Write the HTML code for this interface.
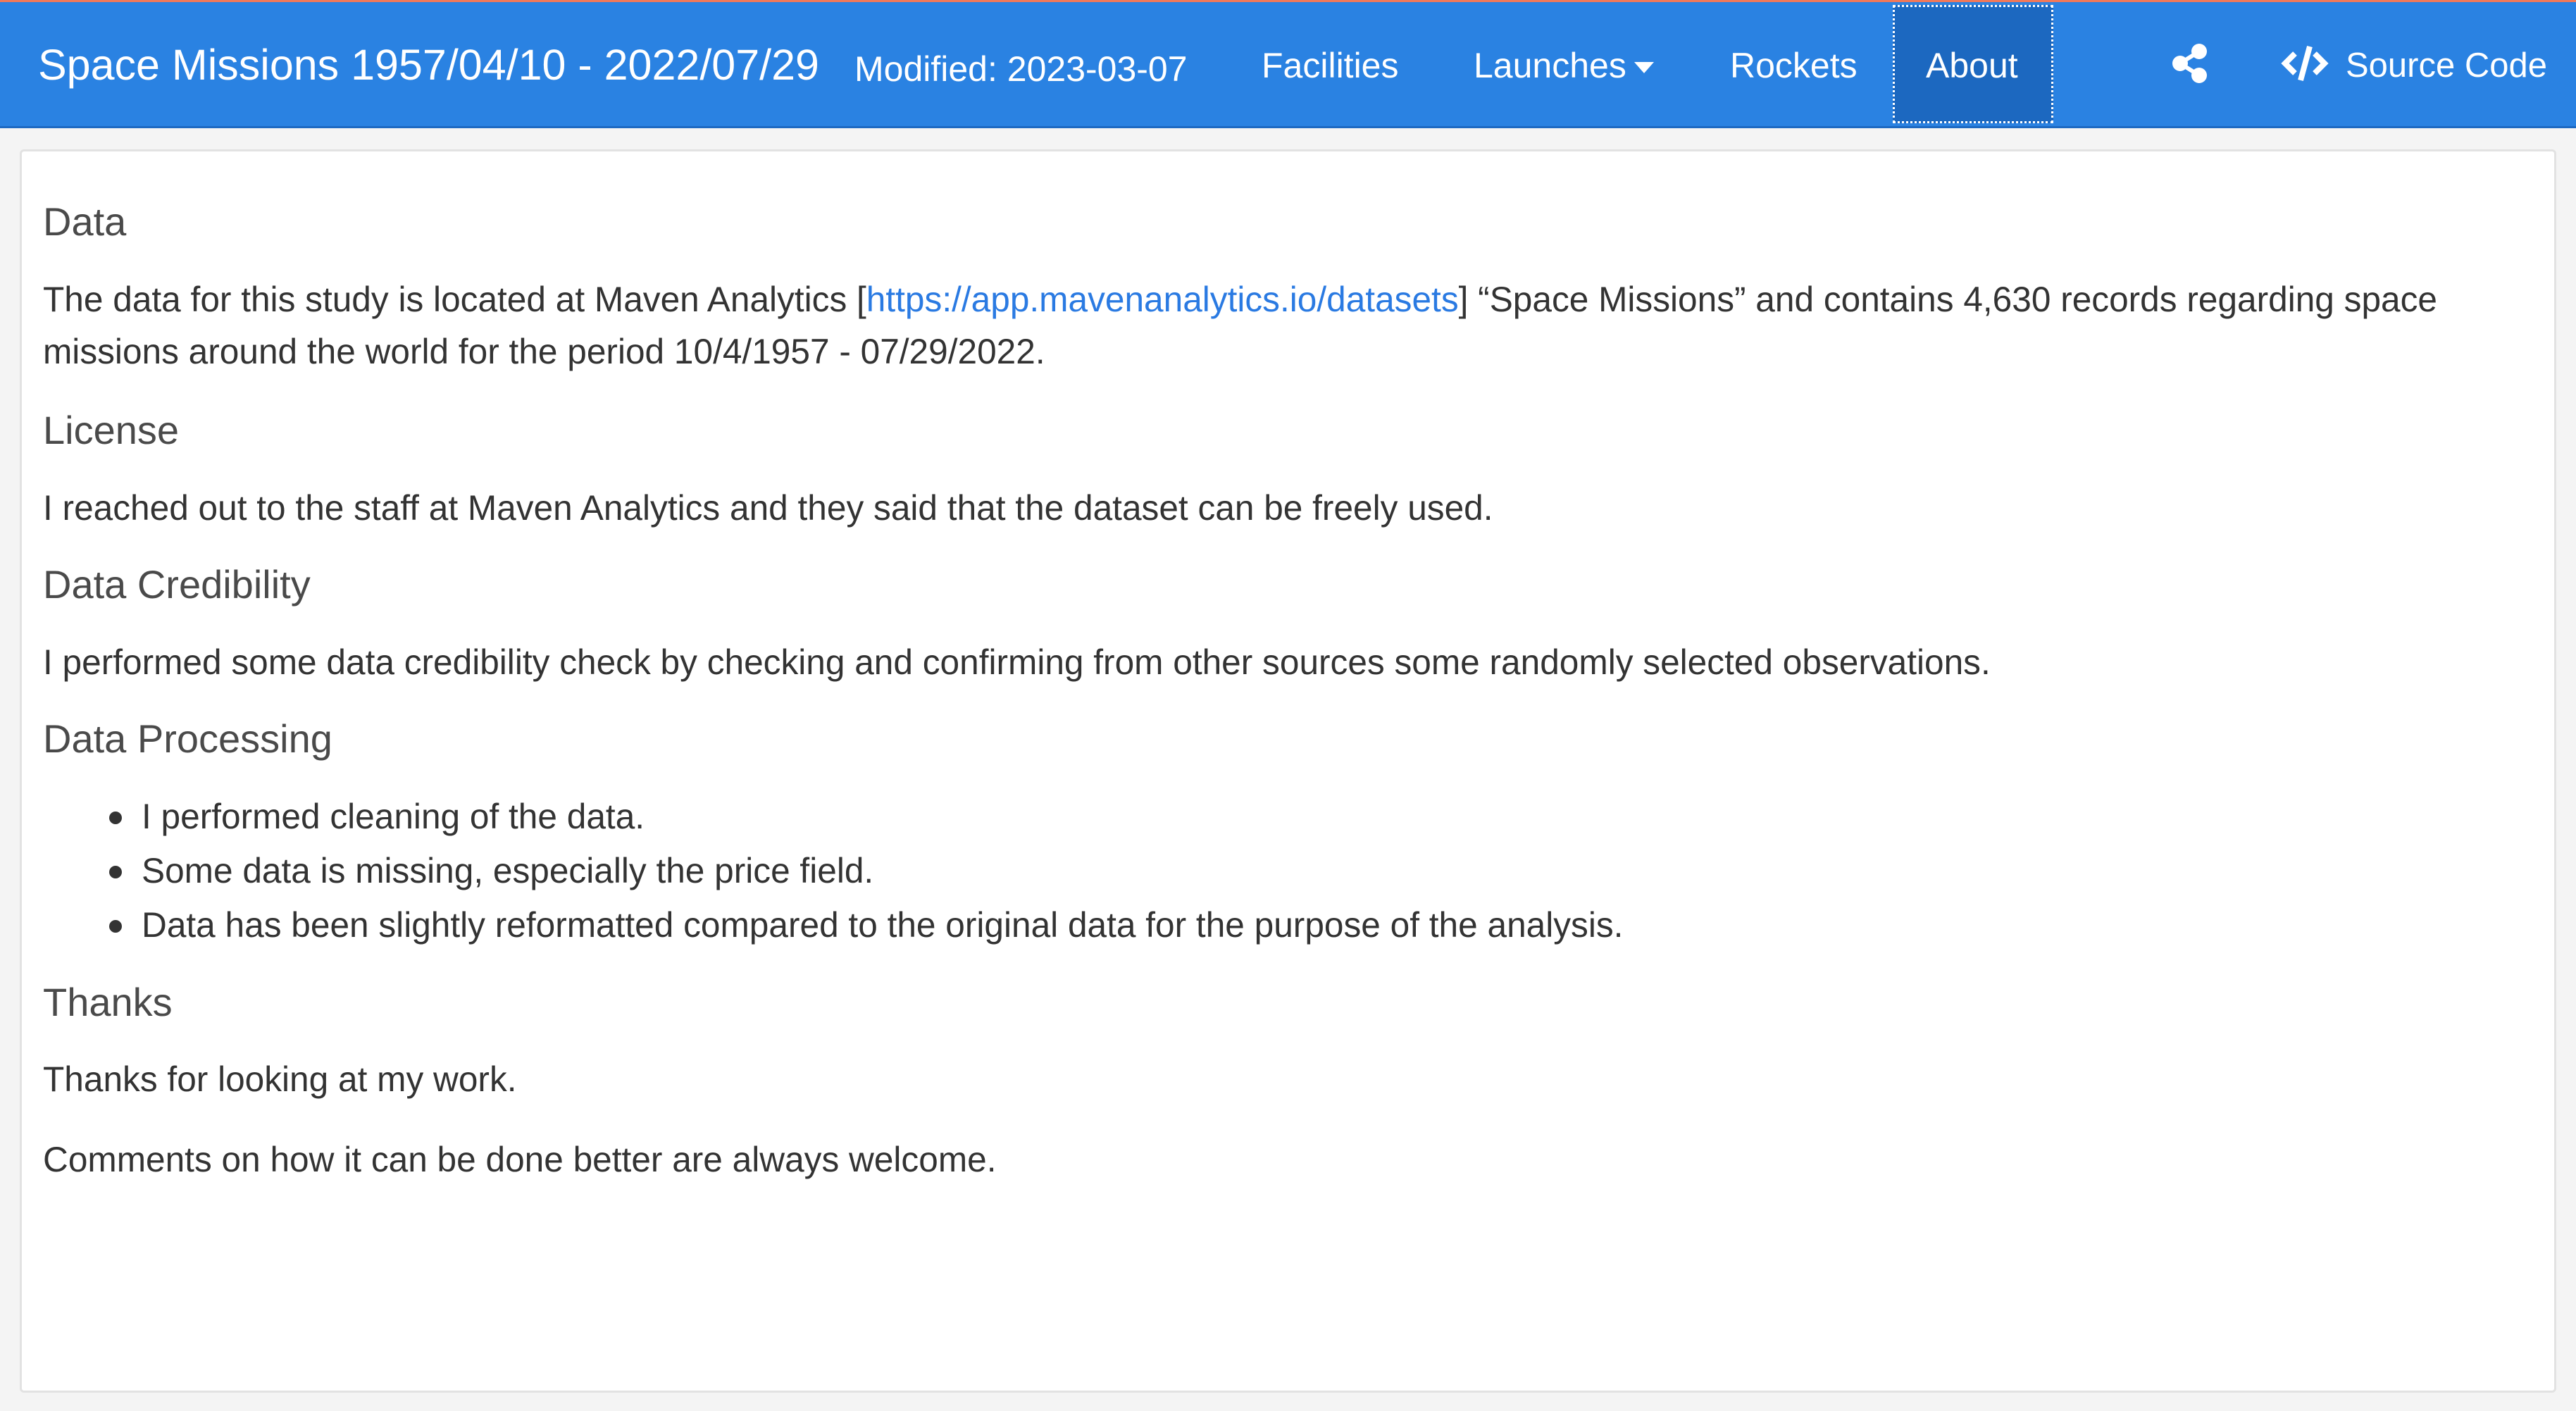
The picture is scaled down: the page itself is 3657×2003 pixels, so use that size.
<!DOCTYPE html>
<html><head><meta charset="utf-8"><style>
*{margin:0;padding:0;box-sizing:border-box}
html,body{width:3657px;height:2003px;overflow:hidden;background:#f4f4f4;font-family:"Liberation Sans",sans-serif;color:#333}
.nav{position:absolute;left:0;top:0;width:3657px;height:182px;background:#2a82e2;border-top:3px solid #f0795a;border-bottom:3px solid #1d69c2}
.n{position:absolute;color:#fff;white-space:nowrap;line-height:60px}
.about{position:absolute;left:2687px;top:7px;width:228px;height:168px;background:#1c68c0;border:3px dotted #fff}
.card{position:absolute;left:28px;top:212px;width:3601px;height:1765px;background:#fff;border:3px solid #e2e2e2;border-radius:6px}
.t{position:absolute;white-space:nowrap;line-height:70px}
.h{font-size:56px;color:#4a4a4a}
.p{font-size:49.6px;color:#333}
a{color:#2a7ae2;text-decoration:none}
.dot{position:absolute;width:18px;height:18px;border-radius:50%;background:#333}
</style></head><body>
<div class="nav"></div>
<div class="n" style="left:54px;top:62px;font-size:61px">Space Missions 1957/04/10 - 2022/07/29</div>
<div class="n" style="left:1213px;top:68px;font-size:50px">Modified: 2023-03-07</div>
<div class="n" style="left:1791px;top:63px;font-size:50px">Facilities</div>
<div class="n" style="left:2092px;top:63px;font-size:50px">Launches</div>
<svg style="position:absolute;left:2320px;top:88px" width="28" height="16"><path d="M0 0H28L14 16Z" fill="#fff"/></svg>
<div class="n" style="left:2456px;top:63px;font-size:50px">Rockets</div>
<div class="about"></div>
<div class="n" style="left:2734px;top:63px;font-size:50px">About</div>
<svg style="position:absolute;left:3080px;top:58px" width="60" height="64" viewBox="3080 58 60 64"><g fill="#fff"><circle cx="3122" cy="73" r="11"/><circle cx="3122" cy="107" r="11"/><circle cx="3095" cy="90" r="11"/></g><path d="M3122 73L3095 90L3122 107" stroke="#fff" stroke-width="6" fill="none"/></svg>
<svg style="position:absolute;left:3236px;top:62px" width="72" height="56" viewBox="3236 62 72 56"><g stroke="#fff" stroke-width="8" fill="none"><path d="M3258 76L3244 90L3258 104"/><path d="M3286 76L3300 90L3286 104"/><path d="M3279 66L3266 114"/></g></svg>
<div class="n" style="left:3330px;top:63px;font-size:49px">Source Code</div>
<div class="card"></div>
<div class="t h" style="left:61px;top:280px">Data</div>
<div class="t p" style="left:61px;top:390px">The data for this study is located at Maven Analytics [<a>https://app.mavenanalytics.io/datasets</a>] “Space Missions” and contains 4,630 records regarding space</div>
<div class="t p" style="left:61px;top:464px">missions around the world for the period 10/4/1957 - 07/29/2022.</div>
<div class="t h" style="left:61px;top:576px">License</div>
<div class="t p" style="left:61px;top:686px">I reached out to the staff at Maven Analytics and they said that the dataset can be freely used.</div>
<div class="t h" style="left:61px;top:795px">Data Credibility</div>
<div class="t p" style="left:61px;top:905px">I performed some data credibility check by checking and confirming from other sources some randomly selected observations.</div>
<div class="t h" style="left:61px;top:1014px">Data Processing</div>
<div class="dot" style="left:155px;top:1152px"></div>
<div class="t p" style="left:201px;top:1124px">I performed cleaning of the data.</div>
<div class="dot" style="left:155px;top:1229px"></div>
<div class="t p" style="left:201px;top:1201px">Some data is missing, especially the price field.</div>
<div class="dot" style="left:155px;top:1306px"></div>
<div class="t p" style="left:201px;top:1278px">Data has been slightly reformatted compared to the original data for the purpose of the analysis.</div>
<div class="t h" style="left:61px;top:1388px">Thanks</div>
<div class="t p" style="left:61px;top:1497px">Thanks for looking at my work.</div>
<div class="t p" style="left:61px;top:1611px">Comments on how it can be done better are always welcome.</div>
</body></html>
